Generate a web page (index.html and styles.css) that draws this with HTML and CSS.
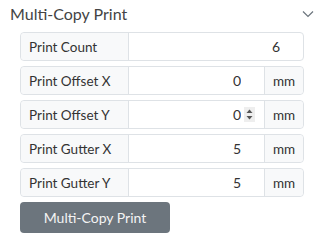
FILE: index.html
```html
<!DOCTYPE html>
<html lang="en">
<head>
    <meta charset="UTF-8">
    <meta name="viewport" content="width=device-width, initial-scale=1.0">
    <title>Multi-Copy Print</title>
    <link rel="stylesheet" href="styles.css">
</head>
<body>
    <div class="panel">
        <div class="panel-header">
            <span class="panel-title">Multi-Copy Print</span>
            <svg class="chevron" width="12" height="8" viewBox="0 0 12 8">
                <path d="M1 1.5 L6 6.5 L11 1.5" fill="none" stroke="#6c757d" stroke-width="1.2"/>
            </svg>
        </div>

        <div class="panel-body">
            <div class="input-group">
                <span class="group-label">Print Count</span>
                <input class="group-input" type="text" value="6">
            </div>
            <div class="input-group">
                <span class="group-label">Print Offset X</span>
                <input class="group-input" type="text" value="0">
                <span class="group-unit">mm</span>
            </div>
            <div class="input-group">
                <span class="group-label">Print Offset Y</span>
                <div class="input-wrap">
                    <input class="group-input" type="text" value="0">
                    <span class="spinner">
                        <svg width="11" height="15" viewBox="0 0 11 15">
                            <path d="M2.5 6 L5.5 2.5 L8.5 6 Z" fill="#555"/>
                            <path d="M2.5 9 L5.5 12.5 L8.5 9 Z" fill="#555"/>
                        </svg>
                    </span>
                </div>
                <span class="group-unit">mm</span>
            </div>
            <div class="input-group">
                <span class="group-label">Print Gutter X</span>
                <input class="group-input" type="text" value="5">
                <span class="group-unit">mm</span>
            </div>
            <div class="input-group">
                <span class="group-label">Print Gutter Y</span>
                <input class="group-input" type="text" value="5">
                <span class="group-unit">mm</span>
            </div>
            <button class="btn btn-secondary">Multi-Copy Print</button>
        </div>
    </div>
</body>
</html>
```

FILE: styles.css
```css
body {
    margin: 0;
    font-family: Lato, "Noto Sans", sans-serif;
    background-color: #ffffff;
    color: #333333;
}
.panel {
    width: 322px;
}
.panel-header {
    display: flex;
    align-items: center;
    justify-content: space-between;
    height: 32px;
    padding: 0 8px 0 10px;
    box-sizing: border-box;
}
.panel-title {
    font-size: 16px;
    color: #444444;
    margin-top: -5px;
}
.chevron {
    margin-top: -4px;
}
.panel-body {
    padding: 0 18px 0 20px;
}
.input-group {
    display: flex;
    height: 29px;
    margin-bottom: 5px;
    border: 1px solid #dee2e6;
    border-radius: 4px;
    box-sizing: border-box;
    font-size: 13.5px;
}
.group-label {
    width: 108px;
    flex: none;
    display: flex;
    align-items: center;
    padding-left: 8px;
    box-sizing: border-box;
    background-color: #f8f9fa;
    border-right: 1px solid #dee2e6;
    border-radius: 4px 0 0 4px;
}
.input-wrap {
    position: relative;
    flex: 1;
    display: flex;
    min-width: 0;
}
.group-input {
    flex: 1;
    min-width: 0;
    border: none;
    outline: none;
    padding: 0 23px 0 8px;
    text-align: right;
    font-family: inherit;
    font-size: 14px;
    color: #333333;
    background: transparent;
}
.spinner {
    position: absolute;
    right: 9px;
    top: 6px;
    width: 11px;
    height: 15px;
    background-color: #eeeeee;
    display: flex;
}
.group-unit {
    width: 38px;
    flex: none;
    display: flex;
    align-items: center;
    justify-content: center;
    background-color: #f8f9fa;
    border-left: 1px solid #dee2e6;
    border-radius: 0 4px 4px 0;
}
.btn {
    font-family: inherit;
    font-size: 14px;
    border: none;
    border-radius: 4px;
    cursor: pointer;
}
.btn-secondary {
    width: 150px;
    height: 31px;
    background-color: #6c757d;
    color: #f4f4f4;
}
```
